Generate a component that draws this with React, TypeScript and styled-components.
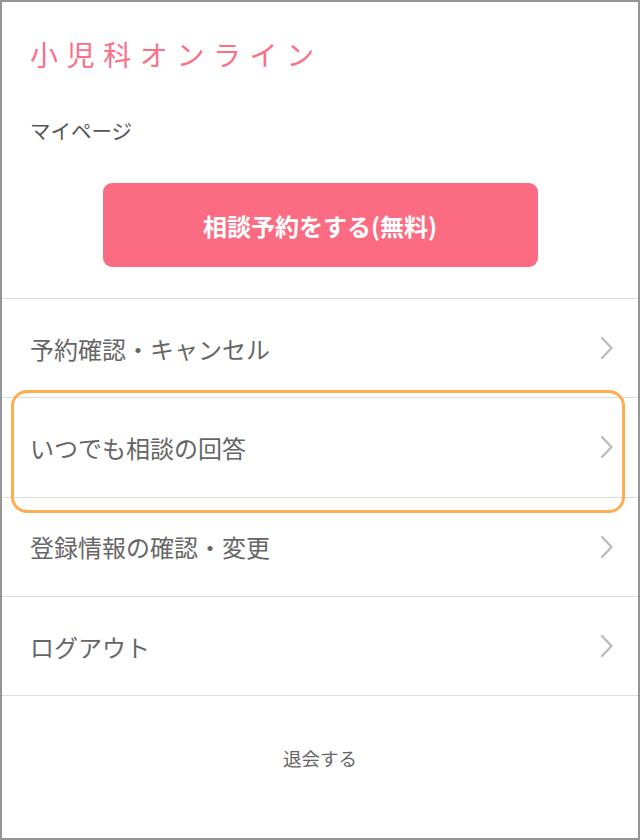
import styled, { createGlobalStyle } from "styled-components";

const GlobalStyle = createGlobalStyle`
  html, body {
    margin: 0;
    padding: 0;
    background: #fff;
  }
  body {
    font-family: "Noto Sans CJK JP", "Noto Sans", sans-serif;
  }
`;

const menuItems = [
  { label: "予約確認・キャンセル" },
  { label: "いつでも相談の回答", highlight: true },
  { label: "登録情報の確認・変更" },
  { label: "ログアウト" },
];

const Chevron = () => (
  <svg width="14" height="24" viewBox="0 0 14 24" fill="none">
    <path
      d="M2 2 L11.5 12 L2 22"
      stroke="#bcbcbc"
      strokeWidth="2.4"
      strokeLinecap="round"
      strokeLinejoin="round"
    />
  </svg>
);

export default function App() {
  return (
    <>
      <GlobalStyle />
      <Frame>
        <Header>
          <Logo>小児科オンライン</Logo>
          <PageTitle>マイページ</PageTitle>
          <ButtonWrapper>
            <ReserveButton>相談予約をする(無料)</ReserveButton>
          </ButtonWrapper>
        </Header>
        <Menu>
          {menuItems.map((item) => (
            <MenuItem key={item.label} $highlight={item.highlight}>
              <MenuLabel>{item.label}</MenuLabel>
              <Chevron />
            </MenuItem>
          ))}
        </Menu>
        <Footer>
          <Withdraw>退会する</Withdraw>
        </Footer>
      </Frame>
    </>
  );
}

const Frame = styled.div`
  box-sizing: border-box;
  width: 640px;
  height: 840px;
  border: 2px solid #959595;
  background: #fff;
  display: flex;
  flex-direction: column;
`;

const Header = styled.header`
  padding: 32px 0 0 28px;
`;

const Logo = styled.h1`
  margin: 0;
  font-size: 28px;
  line-height: 40px;
  font-weight: 400;
  letter-spacing: 8.6px;
  color: #fb6f87;
`;

const PageTitle = styled.div`
  margin-top: 42px;
  font-size: 20.5px;
  line-height: 28px;
  color: #555;
`;

const ButtonWrapper = styled.div`
  display: flex;
  justify-content: center;
  margin: 39px 28px 0 0;
  padding-bottom: 31px;
`;

const ReserveButton = styled.button`
  width: 435px;
  height: 84px;
  border: 0;
  border-radius: 9px;
  background: #fb6c82;
  color: #fff;
  font-family: "Noto Sans CJK JP", "Noto Sans", sans-serif;
  font-size: 24px;
  font-weight: 700;
  cursor: pointer;
`;

const Menu = styled.ul`
  list-style: none;
  margin: 0;
  padding: 0;
  border-top: 1px solid #dcdcdc;
`;

const MenuItem = styled.li<{ $highlight?: boolean }>`
  position: relative;
  height: 98.3px;
  display: flex;
  align-items: center;
  justify-content: space-between;
  padding: 0 24px 0 28px;
  border-bottom: 1px solid #dcdcdc;

  ${({ $highlight }) =>
    $highlight &&
    `
    &::after {
      content: "";
      position: absolute;
      top: -8px;
      left: 9px;
      right: 13px;
      bottom: -16px;
      border: 3px solid #ffad4f;
      border-radius: 16px;
      pointer-events: none;
    }
  `}
`;

const MenuLabel = styled.span`
  font-size: 24px;
  color: #666;
`;

const Footer = styled.footer`
  display: flex;
  justify-content: center;
  padding-top: 49px;
`;

const Withdraw = styled.a`
  font-size: 18.5px;
  line-height: 26px;
  color: #666;
  cursor: pointer;
`;
